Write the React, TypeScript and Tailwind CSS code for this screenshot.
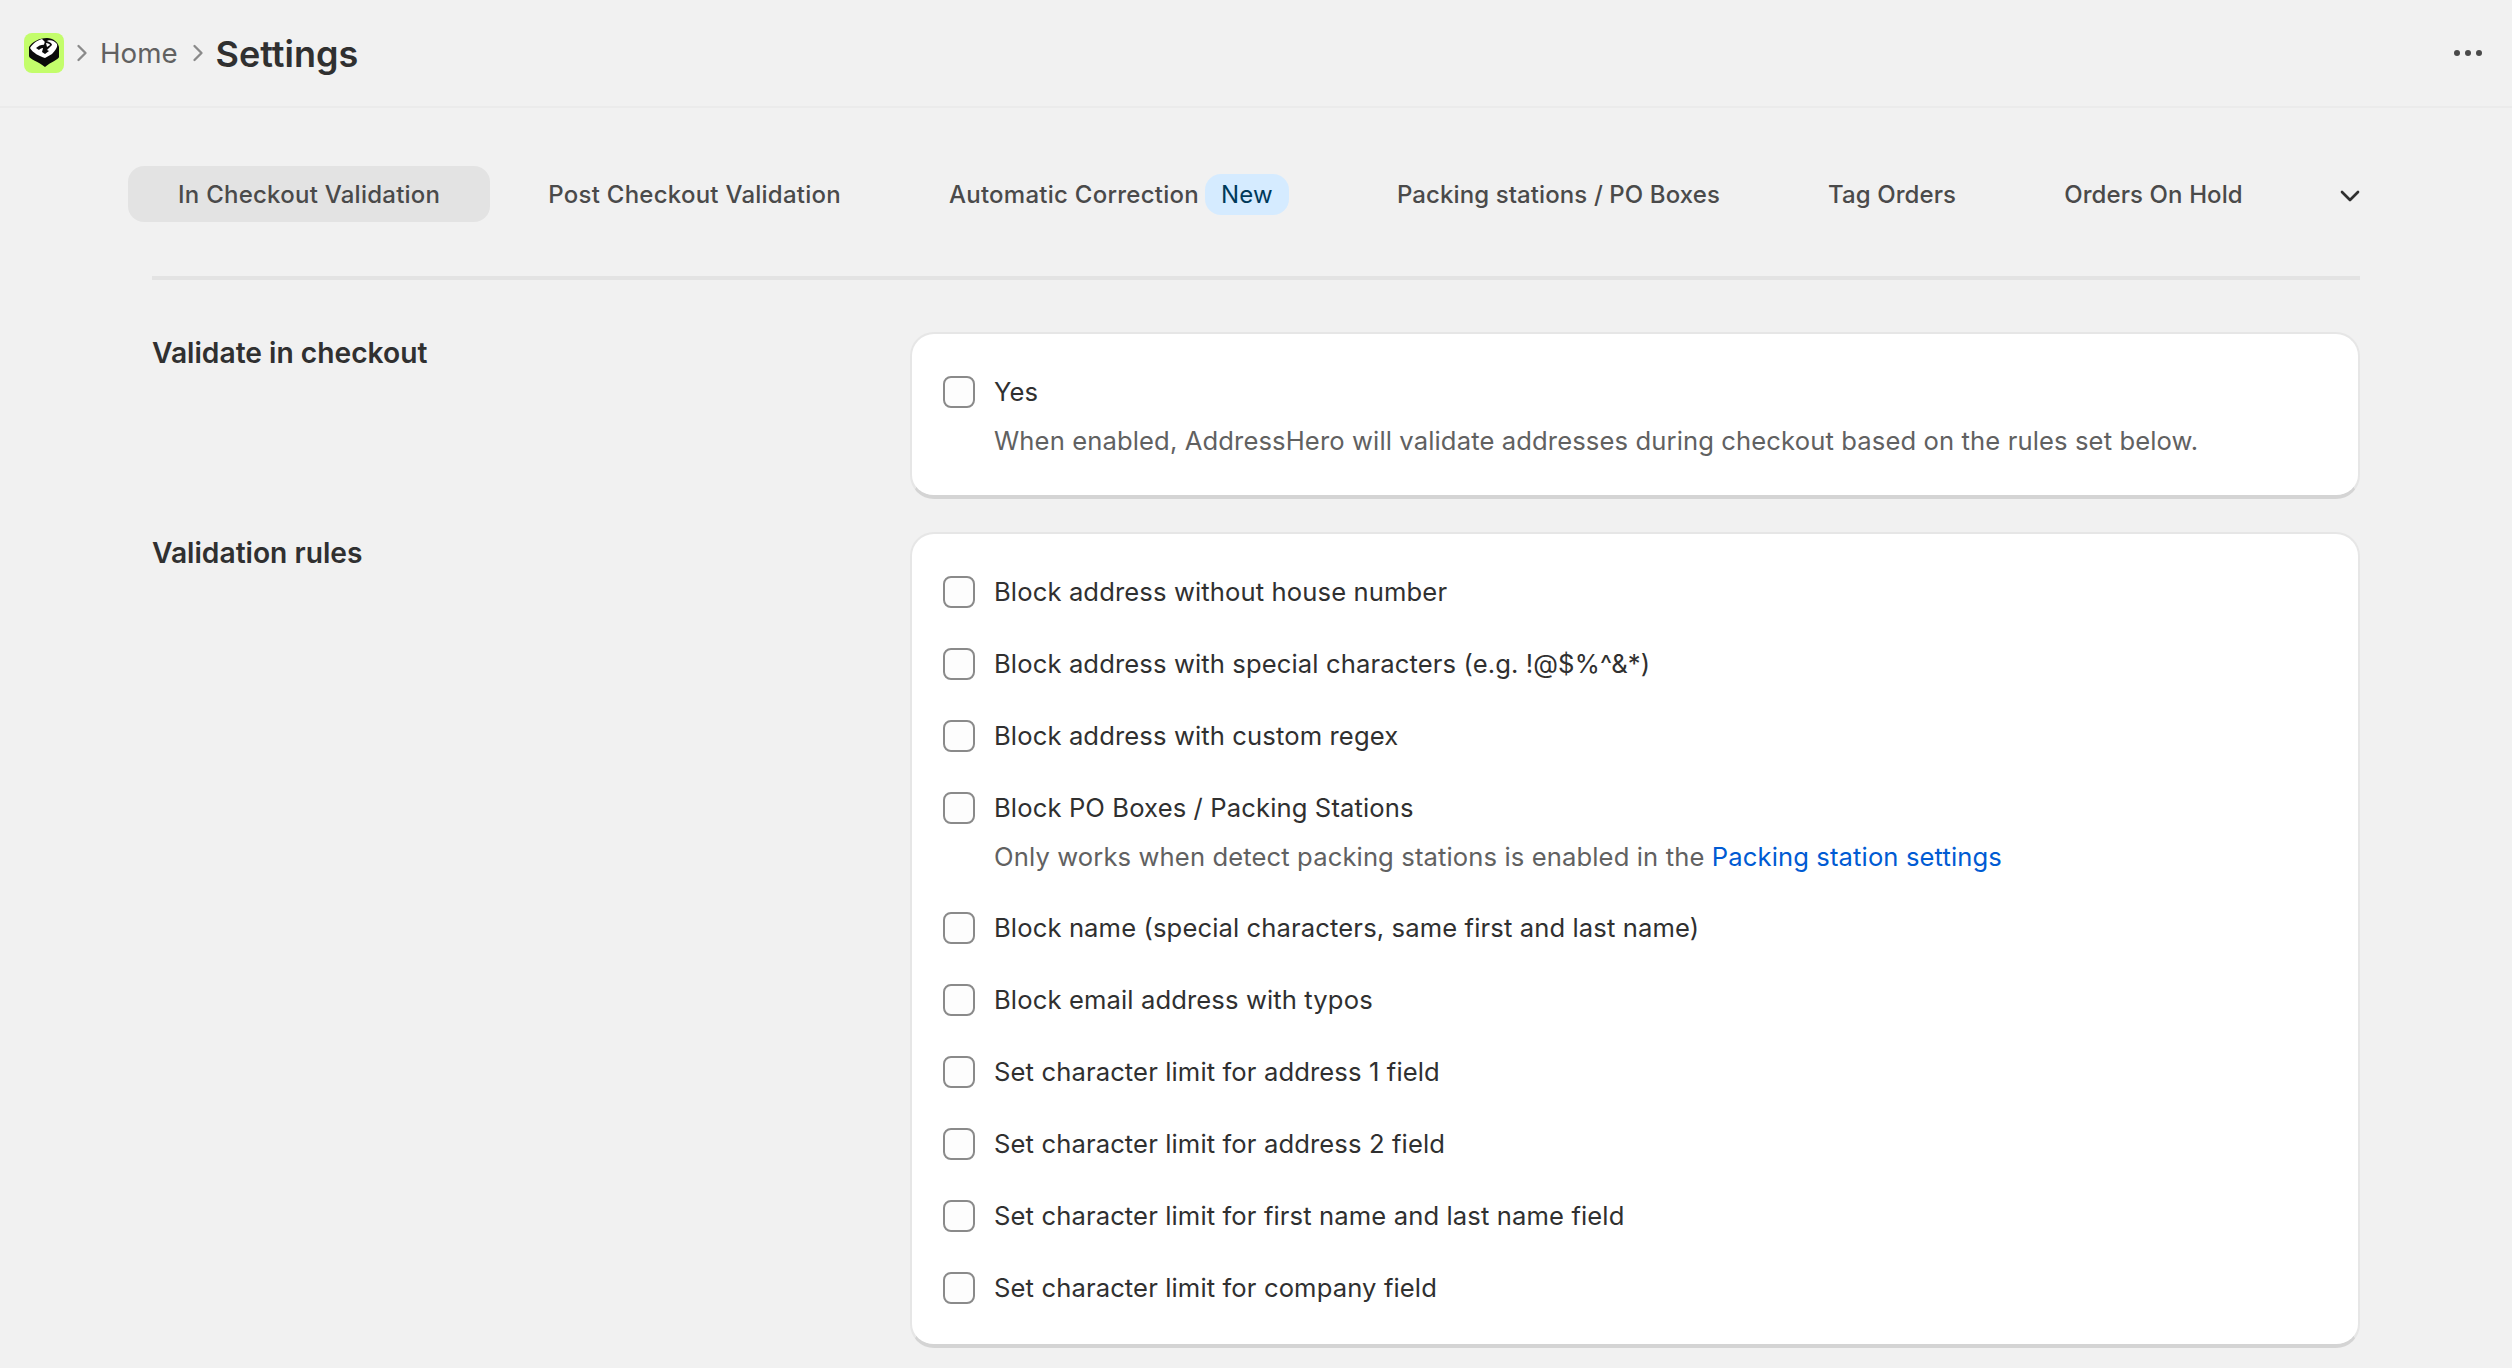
import { ChevronDown, ChevronRight } from 'lucide-react'

const tabs = [
  { label: 'In Checkout Validation', active: true, tracking: 'tracking-[0.25px]' },
  { label: 'Post Checkout Validation', tracking: 'tracking-[0.25px]' },
  { label: 'Automatic Correction', badge: 'New', tracking: 'tracking-[0.25px]' },
  { label: 'Packing stations / PO Boxes', tracking: 'tracking-[0.1px]' },
  { label: 'Tag Orders', tracking: 'tracking-[0.1px]' },
  { label: 'Orders On Hold', tracking: 'tracking-[0.1px]' },
]

const rules: { label: string; help?: boolean }[] = [
  { label: 'Block address without house number' },
  { label: 'Block address with special characters (e.g. !@$%^&*)' },
  { label: 'Block address with custom regex' },
  { label: 'Block PO Boxes / Packing Stations', help: true },
  { label: 'Block name (special characters, same first and last name)' },
  { label: 'Block email address with typos' },
  { label: 'Set character limit for address 1 field' },
  { label: 'Set character limit for address 2 field' },
  { label: 'Set character limit for first name and last name field' },
  { label: 'Set character limit for company field' },
]

function Logo() {
  return (
    <svg viewBox="0 0 40 40" className="w-10 h-10 flex-shrink-0">
      <rect width="40" height="40" rx="8" fill="#c3fd6b" />
      <path d="M5 14 C8 9 15 5 23 5 C29 5 34 9 35 14 L35 24 C35 26 27 29 21 34 C15 29 5 26 5 23 Z" fill="#0a0a0a" />
      <path d="M6 15 C9 10 14 7 18 6 L21 9 C25 6 30 7 33 11 C34 14 31 18 28 21 L21 25 C15 23 9 20 6 15 Z" fill="#ffffff" />
      <path d="M12 15 C15 12 19 11 22 12 L19 15 C17 15 16 16 15 17 Z M21 8 C24 8 28 10 28 12 L23 17 L25 18 L21 21 L18 19 Z" fill="#0a0a0a" />
      <path d="M22 10 C24 10 26 11 26 12 L23 14 Z" fill="#ffffff" />
    </svg>
  )
}

function Checkbox() {
  return <div className="w-8 h-8 rounded-lg border-2 border-[#8a8a8a] bg-[#fdfdfd] flex-shrink-0" />
}

function CheckRow({ label, children }: { label: string; children?: React.ReactNode }) {
  return (
    <div>
      <div className="flex items-center gap-[19px] h-10">
        <Checkbox />
        <span className="pt-[1px]">{label}</span>
      </div>
      {children && <p className="mt-2 ml-[51px] h-10 pt-[1px] leading-10 text-[#616161]">{children}</p>}
    </div>
  )
}

export default function App() {
  return (
    <div className="h-[1368px] overflow-hidden bg-[#f1f1f1] text-[#303030] text-[25.6px] tracking-[0.12px] font-['Inter',sans-serif]">
      {/* Header */}
      <header className="h-[108px] flex items-center justify-between pl-6 pr-6 border-b-2 border-[#ebebeb] tracking-normal">
        <div className="flex items-center">
          <Logo />
          <ChevronRight className="w-7 h-7 ml-1 text-[#8a8a8a]" strokeWidth={2} />
          <span className="ml-1 pt-[2px] text-[#616161] text-[27.7px]">Home</span>
          <ChevronRight className="w-7 h-7 ml-[6px] text-[#8a8a8a]" strokeWidth={2} />
          <span className="ml-1 pt-[2px] text-[36px] font-semibold">Settings</span>
        </div>
        <svg viewBox="0 0 40 12" className="w-10 h-3" fill="#4a4a4a">
          <circle cx="9" cy="6" r="3" />
          <circle cx="20" cy="6" r="3" />
          <circle cx="31" cy="6" r="3" />
        </svg>
      </header>

      {/* Tabs */}
      <nav className="flex items-center gap-2 pl-[128px] pr-[152px] mt-[58px] h-14">
        {tabs.map((tab) => (
          <div
            key={tab.label}
            className={`h-14 px-[50px] rounded-2xl flex items-center font-medium text-[24px] text-[#4a4a4a] whitespace-nowrap ${tab.tracking} ${
              tab.active ? 'bg-[#e3e3e3]' : ''
            }`}
          >
            <span className="pt-[2px]">{tab.label}</span>
            {tab.badge && (
              <span className="ml-[6px] h-[41px] px-4 rounded-2xl bg-[#d5ebff] text-[#003a5a] font-normal flex items-center pt-[2px]">
                {tab.badge}
              </span>
            )}
          </div>
        ))}
        <ChevronDown className="w-8 h-8 mt-1 ml-auto -mr-[6px] text-[#303030]" strokeWidth={2} />
      </nav>

      <main className="pl-[152px] pr-[152px]">
        <div className="h-1 mt-[54px] bg-[#e3e3e3]" />

        {/* Validate in checkout */}
        <section className="flex mt-[52px]">
          <h2 className="w-[758px] h-10 pt-[1px] leading-[40px] font-semibold text-[28.2px] tracking-normal">Validate in checkout</h2>
          <div className="flex-1 h-[167px] rounded-3xl bg-white border-2 border-[#e6e6e6] border-b-[4px] border-b-[#d4d4d4] pl-[31px] pr-8 pt-[38px]">
            <CheckRow label="Yes">When enabled, AddressHero will validate addresses during checkout based on the rules set below.</CheckRow>
          </div>
        </section>

        {/* Validation rules */}
        <section className="flex mt-[33px]">
          <h2 className="w-[758px] h-10 pt-[1px] leading-[40px] font-semibold text-[28.2px] tracking-normal">Validation rules</h2>
          <div className="flex-1 h-[816px] rounded-3xl bg-white border-2 border-[#e6e6e6] border-b-[4px] border-b-[#d4d4d4] pl-[31px] pr-8 pt-[38px] flex flex-col gap-8">
            {rules.map((rule) => (
              <CheckRow key={rule.label} label={rule.label}>
                {rule.help && (
                  <>
                    Only works when detect packing stations is enabled in the{' '}
                    <span className="text-[#005bd3]">Packing station settings</span>
                  </>
                )}
              </CheckRow>
            ))}
          </div>
        </section>
      </main>
    </div>
  )
}
